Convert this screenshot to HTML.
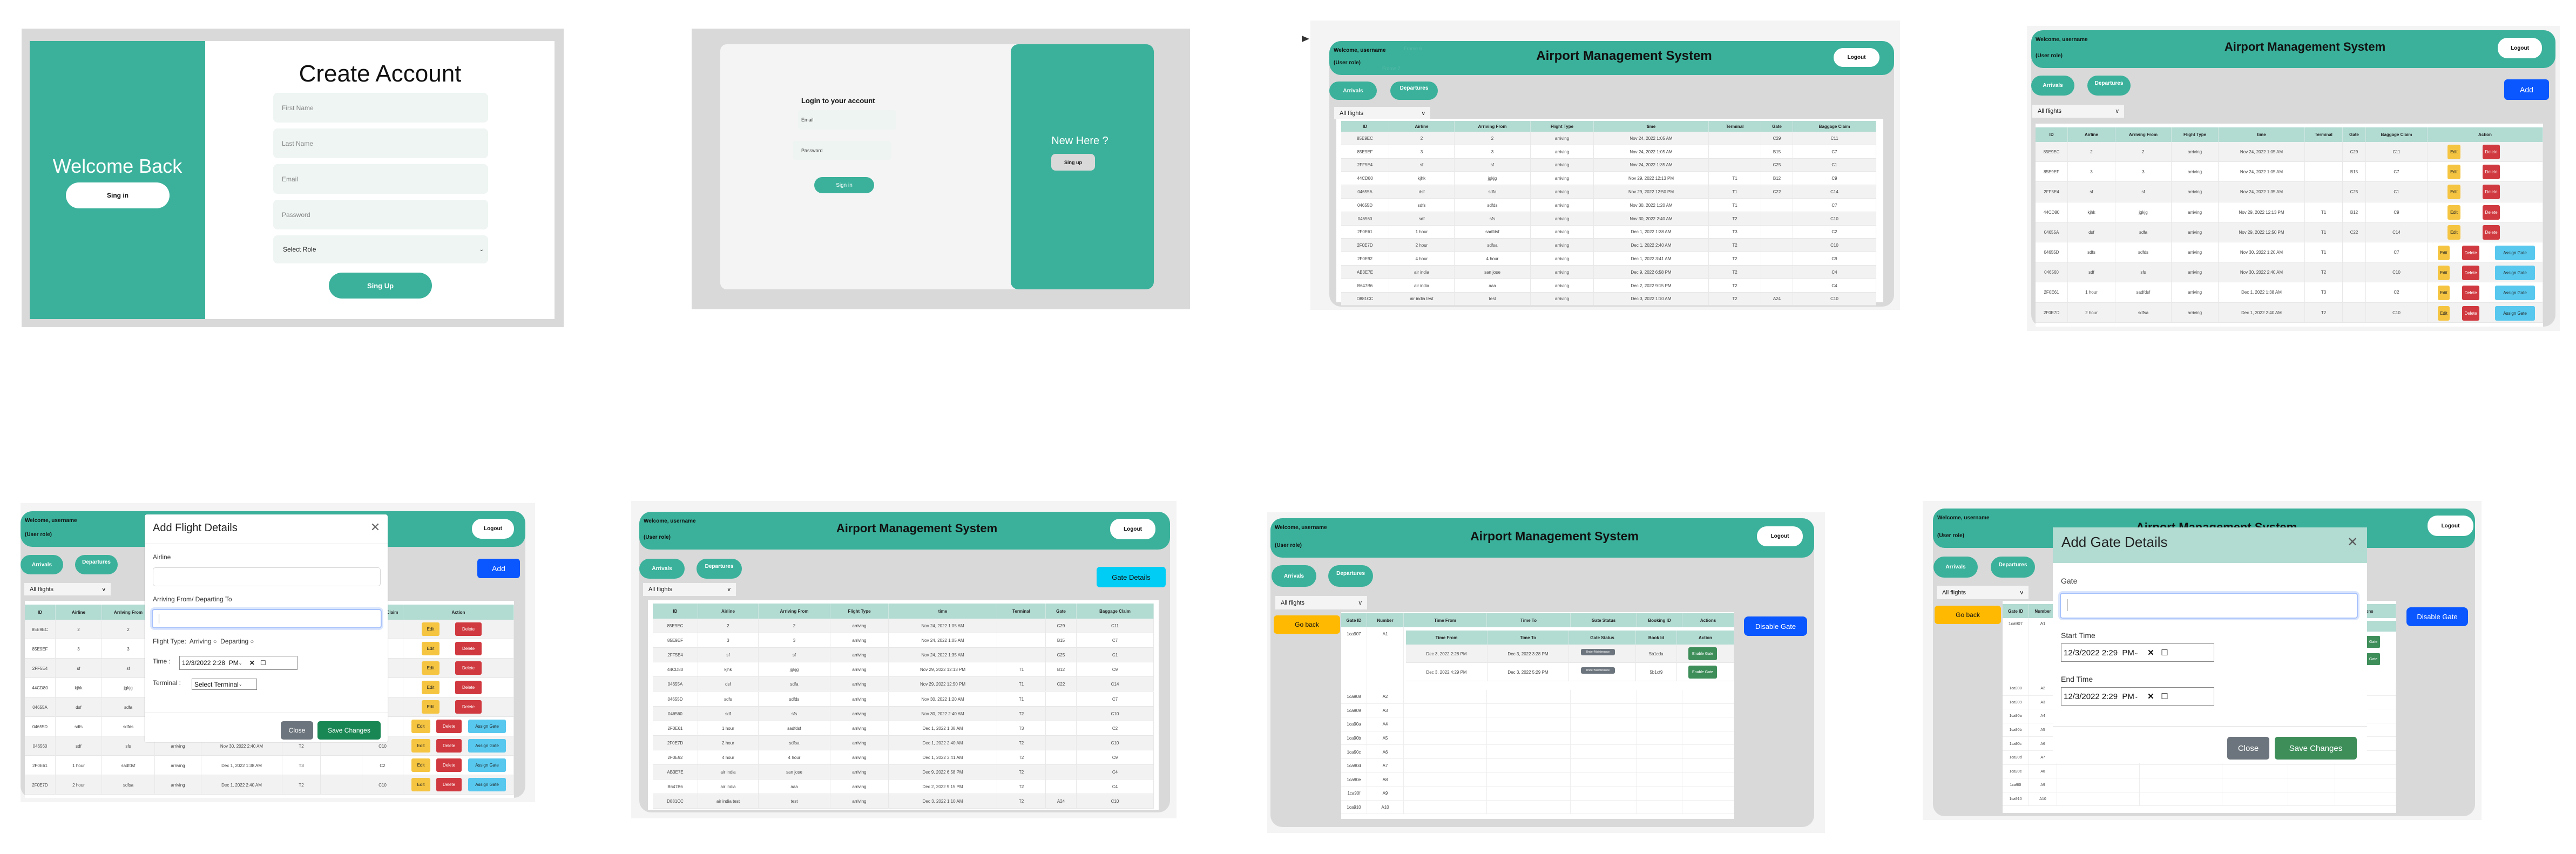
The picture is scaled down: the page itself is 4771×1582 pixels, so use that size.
<!DOCTYPE html>
<html><head><meta charset="utf-8">
<style>
*{box-sizing:border-box;margin:0;padding:0}
html,body{width:4771px;height:1582px;background:#fff;overflow:hidden;font-family:"Liberation Sans",Arial,sans-serif;position:relative}
.a{position:absolute}
.c{display:flex;align-items:center;justify-content:center;text-align:center;white-space:nowrap;overflow:hidden}
.teal{background:#3bb19b}
.b{font-weight:bold}
</style></head><body>
<div id="root"></div>
<script>
var R=document.getElementById('root');
function d(x,y,w,h,st,txt,cls){var e=document.createElement('div');e.className='a '+(cls||'');e.style.cssText='left:'+x+'px;top:'+y+'px;width:'+w+'px;height:'+h+'px;'+(st||'');if(txt!==undefined)e.innerHTML=txt;R.appendChild(e);return e;}
var F=[
['85E9EC','2','2','arriving','Nov 24, 2022 1:05 AM','','C29','C11'],
['85E9EF','3','3','arriving','Nov 24, 2022 1:05 AM','','B15','C7'],
['2FF5E4','sf','sf','arriving','Nov 24, 2022 1:35 AM','','C25','C1'],
['44CD80','kjhk','jgkjg','arriving','Nov 29, 2022 12:13 PM','T1','B12','C9'],
['04655A','dsf','sdfa','arriving','Nov 29, 2022 12:50 PM','T1','C22','C14'],
['04655D','sdfs','sdfds','arriving','Nov 30, 2022 1:20 AM','T1','','C7'],
['046560','sdf','sfs','arriving','Nov 30, 2022 2:40 AM','T2','','C10'],
['2F0E61','1 hour','sadfdsf','arriving','Dec 1, 2022 1:38 AM','T3','','C2'],
['2F0E7D','2 hour','sdfsa','arriving','Dec 1, 2022 2:40 AM','T2','','C10'],
['2F0E92','4 hour','4 hour','arriving','Dec 1, 2022 3:41 AM','T2','','C9'],
['AB3E7E','air india','san jose','arriving','Dec 9, 2022 6:58 PM','T2','','C4'],
['B647B6','air india','aaa','arriving','Dec 2, 2022 9:15 PM','T2','','C4'],
['D881CC','air india test','test','arriving','Dec 3, 2022 1:10 AM','T2','A24','C10']];
var H=['ID','Airline','Arriving From','Flight Type','time','Terminal','Gate','Baggage Claim'];
function table(cols,hy,hh,heads,rows,rh,fs,act){
  var x0=cols[0],x1=cols[cols.length-1];
  d(x0,hy,x1-x0,hh,'background:#b2dbd2');
  for(var i=0;i<heads.length;i++){d(cols[i],hy,cols[i+1]-cols[i],hh,'font-size:'+fs+'px;font-weight:bold;color:#222;border-right:1px solid #cfe6e0',heads[i],'c');}
  for(var r=0;r<rows.length;r++){var y=hy+hh+r*rh;
    d(x0,y,x1-x0,rh,'background:'+(r%2==0?'#f2f2f2':'#fff')+';border-bottom:1px solid #e6e6e6');
    for(var i=0;i<rows[r].length;i++){d(cols[i],y,cols[i+1]-cols[i],rh,'font-size:'+fs+'px;color:#444;border-right:1px solid #e8e8e8',rows[r][i],'c');}
    if(act)act(r,y);}
}
function btn(x,y,w,h,bg,t,fs,col,rad){d(x,y,w,h,'background:'+bg+';color:'+(col||'#fff')+';font-size:'+fs+'px;border-radius:'+(rad||3)+'px',t,'c');}
function header(x,y,w,h,tx,ty,tfs,lx,lw,lh,ly){
  d(x,y,w,h,'border-radius:22px','', 'teal');
  d(x+8,y+8,160,18,'font-size:10px;font-weight:bold;color:#111;display:flex;align-items:center','Welcome, username');
  d(x+8,y+h-32,160,18,'font-size:10px;font-weight:bold;color:#111;display:flex;align-items:center','(User role)');
  d(tx-250,ty-16,500,32,'font-size:'+tfs+'px;font-weight:bold;color:#111','Airport Management System','c');
  d(lx,ly,lw,lh,'background:#fff;border-radius:18px;font-size:10px;font-weight:bold;color:#111','Logout','c');
}
function navbtns(x,y,w,h,gap){
  d(x,y,w,h,'border-radius:20px;color:#fff;font-size:10px;font-weight:bold','Arrivals','c teal');
  d(x+w+gap,y,w,h,'border-radius:20px;color:#fff;font-size:10px;font-weight:bold;align-items:flex-start;padding-top:'+(h/2-10)+'px','Departures','c teal');
}
function sel(x,y,w,h){d(x,y,w,h,'background:#f4f4f4;font-size:11px;color:#111;display:flex;align-items:center;justify-content:space-between;padding:0 10px','<span>All flights</span><span>v</span>');}

/* ===== Panel 1: Create account ===== */
d(40,53,1004,553,'background:#d9d9d9');
d(55,76,972,515,'background:#fff');
d(55,76,325,515,'','', 'teal');
d(55,285,325,46,'color:#fff;font-size:36px','Welcome Back','c');
d(122,338,192,48,'background:#fff;border-radius:24px;font-size:12px;font-weight:bold;color:#111','Sing in','c');
d(404,112,600,50,'color:#111;font-size:44px','Create Account','c');
var ph=['First Name','Last Name','Email','Password'];var iy=[172,238,304,370];
for(var i=0;i<4;i++)d(506,iy[i],398,55,'background:#eef5f2;border-radius:8px;font-size:12px;color:#888;display:flex;align-items:center;padding-left:16px',ph[i]);
d(506,436,398,52,'background:#eef5f2;border-radius:8px;font-size:12px;color:#222;display:flex;align-items:center;justify-content:space-between;padding:0 8px 0 18px','<span>Select Role</span><span style="font-size:10px">&#8964;</span>');
d(609,505,191,48,'border-radius:24px;color:#fff;font-size:13px;font-weight:bold','Sing Up','c teal');

/* ===== Panel 2: Login ===== */
d(1281,53,923,520,'background:#d9d9d9');
d(1334,82,560,454,'background:#f4f4f4;border-radius:12px 0 0 12px');
d(1872,82,265,454,'border-radius:14px','', 'teal');
d(1484,176,200,20,'font-size:13px;font-weight:bold;color:#111;display:flex;align-items:center','Login to your account');
d(1478,204,182,36,'background:#eef4f1;border-radius:6px;font-size:9px;color:#333;display:flex;align-items:center;padding-left:6px','Email');
d(1468,261,183,35,'background:#eef4f1;border-radius:6px;font-size:9px;color:#333;display:flex;align-items:center;padding-left:16px','Password');
d(1508,328,111,30,'border-radius:15px;color:#fff;font-size:10px','Sign in','c teal');
d(1880,246,240,30,'color:#fff;font-size:20px','New Here ?','c');
d(1947,285,81,31,'background:#d9d9d9;border-radius:8px;font-size:9px;font-weight:bold;color:#111','Sing up','c');

/* ===== Panel 3 ===== */
d(2427,38,1092,536,'background:#f4f4f4');
d(2411,66,0,0,'border-top:6px solid transparent;border-bottom:6px solid transparent;border-left:14px solid #333');
d(2462,76,1046,492,'background:#d9d9d9;border-radius:22px');
header(2462,76,1046,63,3008,104,24,3396,85,35,89);
d(2600,85,60,14,'font-size:9px;color:#55b9a6','Frame 6');
d(2560,122,60,14,'font-size:9px;color:#55b9a6','Frame 7');
navbtns(2462,151,88,34,25);
sel(2471,198,178,23);
d(2475,220,1013,340,'background:#fff');
table([2484,2573,2694,2835,2952,3165,3262,3321,3475],224,20,H,F,24.8,8);

/* ===== Panel 4 ===== */
d(3754,48,987,565,'background:#f4f4f4');
d(3762,56,971,549,'background:#d9d9d9;border-radius:22px');
header(3762,56,971,70,4269,87,22,4626,82,38,70);
navbtns(3762,140,80,37,24);
btn(4638,147,83,38,'#0b57ff','Add',14,'#fff',6);
d(3764,194,170,24,'');sel(3764,194,170,24);
d(3770,229,940,376,'background:#fff');
table([3770,3830,3918,4022,4109,4269,4339,4382,4496,4710],236,27,H.concat(['Action']),F.slice(0,9).map(function(r){return r.concat([''])}),37.2,8,function(r,y){
  var cx=4496;if(r<5){btn(cx+37,y+5,24,27,'#f5c542','Edit',8,'#222');btn(cx+102,y+5,32,27,'#d0393f','Delete',8);}
  else{btn(cx+19,y+6,22,27,'#f5c542','Edit',8,'#222');btn(cx+64,y+6,32,27,'#d0393f','Delete',8);btn(cx+125,y+6,74,27,'#58c8ee','Assign Gate',8,'#222');}
});

/* ===== Panel 5 ===== */
d(38,932,953,554,'background:#f4f4f4');
d(38,947,935,531,'background:#d9d9d9;border-radius:22px');
header(38,947,935,66,500,978,22,874,78,37,961);
navbtns(38,1028,79,36,22);
btn(884,1035,79,36,'#0b57ff','Add',14,'#fff',6);
sel(45,1080,160,23);
d(46,1113,906,365,'background:#fff');
table([46,103,189,287,373,523,594,671,747,952],1120,28,H.concat(['Action']),F.slice(0,9).map(function(r){return r.concat([''])}),36,8,function(r,y){
  var cx=747;if(r<5){btn(cx+34,y+5,33,25,'#f5c542','Edit',8,'#222');btn(cx+96,y+5,49,25,'#d0393f','Delete',8);}
  else{btn(cx+15,y+5,35,25,'#f5c542','Edit',8,'#222');btn(cx+61,y+5,47,25,'#d0393f','Delete',8);btn(cx+120,y+5,70,25,'#58c8ee','Assign Gate',8,'#222');}
});
/* modal */
d(268,953,450,422,'background:#fff;border-radius:4px;box-shadow:0 0 2px rgba(0,0,0,.2)');
d(283,962,300,32,'font-size:20px;color:#222;display:flex;align-items:center','Add Flight Details');
d(680,962,30,30,'font-size:22px;color:#666','&#10005;','c');
d(268,1007,450,1,'background:#e3e3e3');
d(283,1025,200,18,'font-size:12px;color:#333','Airline');
d(283,1051,422,35,'border:1px solid #d8d8d8;border-radius:5px');
d(283,1103,300,18,'font-size:12px;color:#333','Arriving From/ Departing To');
d(281,1128,426,36,'border:2px solid #a8c2fb;border-radius:5px;box-shadow:0 0 0 3px #dbe6fd');
d(294,1137,1,18,'background:#333');
d(283,1181,300,18,'font-size:12px;color:#333','Flight Type:&nbsp; Arriving <span style="font-size:11px">&#9675;</span>&nbsp; Departing <span style="font-size:11px">&#9675;</span>');
d(283,1218,50,18,'font-size:12px;color:#333','Time :');
d(332,1215,219,26,'border:1px solid #888;font-size:12px;color:#111;display:flex;align-items:center;padding-left:4px','12/3/2022 2:28 &nbsp;PM<span style="font-size:8px">&#8964;</span>&nbsp;&nbsp;&nbsp;&nbsp;<b>&#10005;</b>&nbsp;&nbsp;&nbsp;&#9744;');
d(283,1258,70,18,'font-size:12px;color:#333','Terminal :');
d(355,1257,121,21,'border:1px solid #888;font-size:12px;color:#111;display:flex;align-items:center;padding-left:4px','Select Terminal<span style="font-size:8px">&#8964;</span>');
d(268,1320,450,1,'background:#e3e3e3');
btn(520,1336,60,34,'#6c757d','Close',12,'#fff',5);
btn(588,1336,117,34,'#198754','Save Changes',12,'#fff',5);

/* ===== Panel 6 ===== */
d(1169,928,1010,588,'background:#f4f4f4');
d(1184,948,983,557,'background:#d9d9d9;border-radius:22px');
header(1184,948,983,70,1698,979,22,2056,84,38,961);
navbtns(1184,1035,84,37,22);
btn(2031,1050,128,38,'#00cdf5','Gate Details',13,'#111',6);
d(1191,1080,172,24,'');sel(1191,1080,172,24);
d(1200,1112,946,388,'background:#fff');
table([1209,1293,1405,1538,1646,1847,1937,1994,2137],1118,28,H,F,27.1,8);

/* ===== Panel 7 ===== */
d(2347,949,1033,594,'background:#f4f4f4');
d(2353,960,1007,572,'background:#d9d9d9;border-radius:22px');
header(2353,960,1007,73,2879,993,23,3254,85,37,975);
navbtns(2355,1047,83,40,22);
sel(2362,1104,170,25);
btn(2359,1140,123,34,'#ffb900','Go back',12,'#111',6);
btn(3230,1142,117,36,'#0b57ff','Disable Gate',13,'#fff',8);
d(2484,1134,728,383,'background:#fff');
var gc=[2484,2532,2600,2754,2909,3032,3116,3212];
var gh=['Gate ID','Number','Time From','Time To','Gate Status','Booking ID','Actions'];
table(gc,1136,26,gh,[],26,8);
d(2484,1162,48,116,'font-size:8px;color:#444;padding-top:8px;text-align:center;border-right:1px solid #eee','1ca907');
d(2532,1162,68,116,'font-size:8px;color:#444;padding-top:8px;text-align:center;border-right:1px solid #eee','A1');
var nc=[2604,2755,2906,3030,3106,3212];
table(nc,1168,26,['Time From','Time To','Gate Status','Book Id','Action'],[['Dec 3, 2022 2:28 PM','Dec 3, 2022 3:28 PM','','5b1cda',''],['Dec 3, 2022 4:29 PM','Dec 3, 2022 5:29 PM','','5b1cf9','']],34,8,function(r,y){
  btn(2928,y+8,63,12,'#6c757d','Under Maintenance',5,'#fff',3);
  btn(3127,y+5,53,24,'#3e8e5a','Enable Gate',7,'#fff',3);
});
d(2484,1278,728,1,'background:#eee');
var GR=[];for(var i=2;i<=10;i++){GR.push(['1ca9'+['08','09','0a','0b','0c','0d','0e','0f','10'][i-2],'A'+i,'','','','','']);}
for(var r=0;r<GR.length;r++){var y=1278+r*25.6;d(2484,y,728,25.6,'background:#fff;border-bottom:1px solid #eee');
  for(var i=0;i<7;i++)d(gc[i],y,gc[i+1]-gc[i],25.6,'font-size:8px;color:#444;border-right:1px solid #eee',GR[r][i],'c');}

/* ===== Panel 8 ===== */
d(3561,928,1035,591,'background:#f4f4f4');
d(3580,942,1004,570,'background:#d9d9d9;border-radius:22px');
header(3580,942,1004,73,4105,977,22,4496,85,38,955);
navbtns(3581,1031,82,39,24);
sel(3587,1085,170,25);
btn(3583,1122,123,34,'#ffb900','Go back',12,'#111',6);
btn(4457,1125,114,35,'#0b57ff','Disable Gate',13,'#fff',8);
d(3709,1113,729,393,'background:#fff');
var gc2=[3709,3758,3810,3963,4116,4238,4325,4438];
table(gc2,1119,26,gh,[],26,8);
d(3709,1145,49,118,'font-size:8px;color:#444;padding-top:6px;text-align:center;border-right:1px solid #eee','1ca907');
d(3758,1145,52,118,'font-size:8px;color:#444;padding-top:6px;text-align:center;border-right:1px solid #eee','A1');
d(4383,1150,55,20,'background:#b2dbd2');
btn(4383,1178,25,22,'#3e8e5a','Gate',7,'#fff',2);
btn(4383,1210,25,22,'#3e8e5a','Gate',7,'#fff',2);
for(var r=0;r<GR.length;r++){var y=1263+r*25.6;d(3709,y,729,25.6,'background:#fff;border-bottom:1px solid #eee');
  for(var i=0;i<7;i++)d(gc2[i],y,gc2[i+1]-gc2[i],25.6,'font-size:7px;color:#444;border-right:1px solid #eee',GR[r][i],'c');}
/* modal */
d(3802,977,582,437,'background:#fff');
d(3802,977,582,66,'background:#b2dbd2');
d(3818,986,300,36,'font-size:26px;color:#222;display:flex;align-items:center','Add Gate Details');
d(4340,987,34,34,'font-size:24px;color:#555','&#10005;','c');
d(3817,1068,100,20,'font-size:14px;color:#333','Gate');
d(3815,1098,552,48,'border:2px solid #a8c2fb;border-radius:5px;box-shadow:0 0 0 3px #dbe6fd');
d(3828,1110,1,22,'background:#333');
d(3817,1169,150,20,'font-size:14px;color:#333','Start Time');
d(3817,1192,284,34,'border:1px solid #888;font-size:15px;color:#111;display:flex;align-items:center;padding-left:4px','12/3/2022 2:29 &nbsp;PM<span style="font-size:9px">&#8964;</span>&nbsp;&nbsp;&nbsp;&nbsp;<b>&#10005;</b>&nbsp;&nbsp;&nbsp;&#9744;');
d(3817,1250,150,20,'font-size:14px;color:#333','End Time');
d(3817,1273,284,34,'border:1px solid #888;font-size:15px;color:#111;display:flex;align-items:center;padding-left:4px','12/3/2022 2:29 &nbsp;PM<span style="font-size:9px">&#8964;</span>&nbsp;&nbsp;&nbsp;&nbsp;<b>&#10005;</b>&nbsp;&nbsp;&nbsp;&#9744;');
d(3802,1345,582,1,'background:#e3e3e3');
btn(4125,1365,78,42,'#6c757d','Close',15,'#fff',5);
btn(4213,1365,152,42,'#3e8e5a','Save Changes',15,'#fff',5);
</script>
</body></html>
